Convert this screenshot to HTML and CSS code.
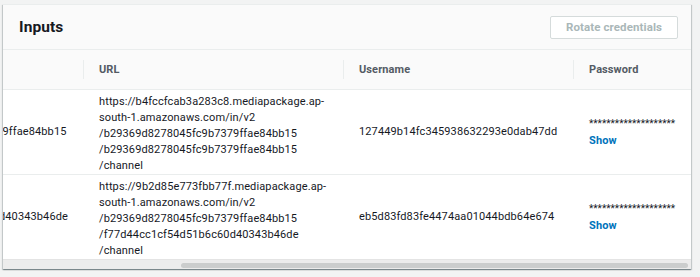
FILE: index.html
```html
<!DOCTYPE html>
<html lang="en">
<head>
<meta charset="utf-8">
<title>Inputs</title>
<link rel="stylesheet" href="styles.css">
</head>
<body>
<div class="page">
  <section class="card">
    <header class="card-header">
      <h2 class="card-title">Inputs</h2>
      <button class="btn" type="button" disabled>Rotate credentials</button>
    </header>
    <div class="table-wrap">
      <table class="table">
        <colgroup>
          <col class="c-name"><col class="c-id"><col class="c-url"><col class="c-user"><col class="c-pass">
        </colgroup>
        <thead>
          <tr>
            <th>Name</th>
            <th>ID</th>
            <th>URL</th>
            <th>Username</th>
            <th>Password</th>
          </tr>
        </thead>
        <tbody>
          <tr>
            <td>input-1</td>
            <td>b29369d8278045fc9b7379ffae84bb15</td>
            <td class="url">https://b4fccfcab3a283c8.mediapackage.ap-<br>south-1.amazonaws.com/in/v2<br>/b29369d8278045fc9b7379ffae84bb15<br>/b29369d8278045fc9b7379ffae84bb15<br>/channel</td>
            <td>127449b14fc345938632293e0dab47dd</td>
            <td class="pass"><div class="stars">********************</div><a class="link" href="#">Show</a></td>
          </tr>
          <tr>
            <td>input-2</td>
            <td>f77d44cc1cf54d51b6c60d40343b46de</td>
            <td class="url">https://9b2d85e773fbb77f.mediapackage.ap-<br>south-1.amazonaws.com/in/v2<br>/b29369d8278045fc9b7379ffae84bb15<br>/f77d44cc1cf54d51b6c60d40343b46de<br>/channel</td>
            <td>eb5d83fd83fe4474aa01044bdb64e674</td>
            <td class="pass"><div class="stars">********************</div><a class="link" href="#">Show</a></td>
          </tr>
        </tbody>
      </table>
    </div>
    <div class="scrollbar" aria-hidden="true"><div class="thumb"></div></div>
  </section>
</div>
</body>
</html>
```

FILE: styles.css
```css
* { box-sizing: border-box; }

html, body {
  margin: 0;
  padding: 0;
  background: #f2f3f3;
}

body {
  font-family: Roboto, "Liberation Sans", Arial, sans-serif;
  color: #16191f;
  font-size: 11px;
}

.page {
  padding: 4px 9px 7px 3px;
}

.card {
  width: 688px;
  background: #ffffff;
  box-shadow: 0 1px 1px 0 rgba(0, 28, 36, 0.3), 1px 1px 1px 0 rgba(0, 28, 36, 0.15), -1px 1px 1px 0 rgba(0, 28, 36, 0.15);
  border-top: 1px solid #eaeded;
}

.card-header {
  display: flex;
  align-items: center;
  justify-content: space-between;
  height: 45px;
  padding: 0 13px 0 16px;
  background: #fafafa;
  border-bottom: 1px solid #eaeded;
}

.card-title {
  margin: 0;
  font-size: 15.5px;
  font-weight: 700;
  color: #16191f;
  letter-spacing: 0.1px;
}

.btn {
  width: 128px;
  height: 23px;
  padding: 0;
  border: 1px solid #d5dbdb;
  border-radius: 2px;
  background: #ffffff;
  color: #aab7b8;
  font-family: inherit;
  font-size: 11.5px;
  font-weight: 700;
  letter-spacing: 0.1px;
}

.table-wrap {
  overflow: hidden;
  direction: rtl;
}

.table {
  direction: ltr;
  width: 926px;
  table-layout: fixed;
  border-collapse: collapse;
  border-spacing: 0;
}

.c-name { width: 92px; }
.c-id { width: 226px; }
.c-url { width: 260px; }
.c-user { width: 230px; }
.c-pass { width: 118px; }

.table th {
  position: relative;
  height: 39px;
  padding: 1px 16px 0;
  text-align: left;
  background: #fafafa;
  border-bottom: 1px solid #eaeded;
  color: #545b64;
  font-size: 11px;
  font-weight: 700;
  letter-spacing: 0.1px;
}

.table th + th::before {
  content: "";
  position: absolute;
  left: 0;
  top: 10px;
  bottom: 10px;
  border-left: 1px solid #eaeded;
}

.table td {
  padding: 0 16px;
  vertical-align: middle;
  white-space: nowrap;
  line-height: 16px;
  letter-spacing: 0.12px;
  border-bottom: 1px solid #eaeded;
  color: #16191f;
}

.table tbody tr:last-child td {
  border-bottom: 0;
}

.table td.url {
  height: 85px;
  padding-top: 4px;
  padding-bottom: 0;
}

.table tbody tr:last-child td.url {
  height: 85px;
}

.table td.pass {
  line-height: 17px;
}

.stars {
  font-size: 10px;
  letter-spacing: 0;
  color: #16191f;
}

.link {
  color: #0073bb;
  font-weight: 700;
  text-decoration: none;
}

.scrollbar {
  height: 10px;
  padding: 3px 3px 2px 178px;
  background: #ececec;
  border-top: 1px solid #e4e4e4;
}

.thumb {
  height: 5px;
  border-radius: 3px;
  background: #cbcdcd;
}
```
